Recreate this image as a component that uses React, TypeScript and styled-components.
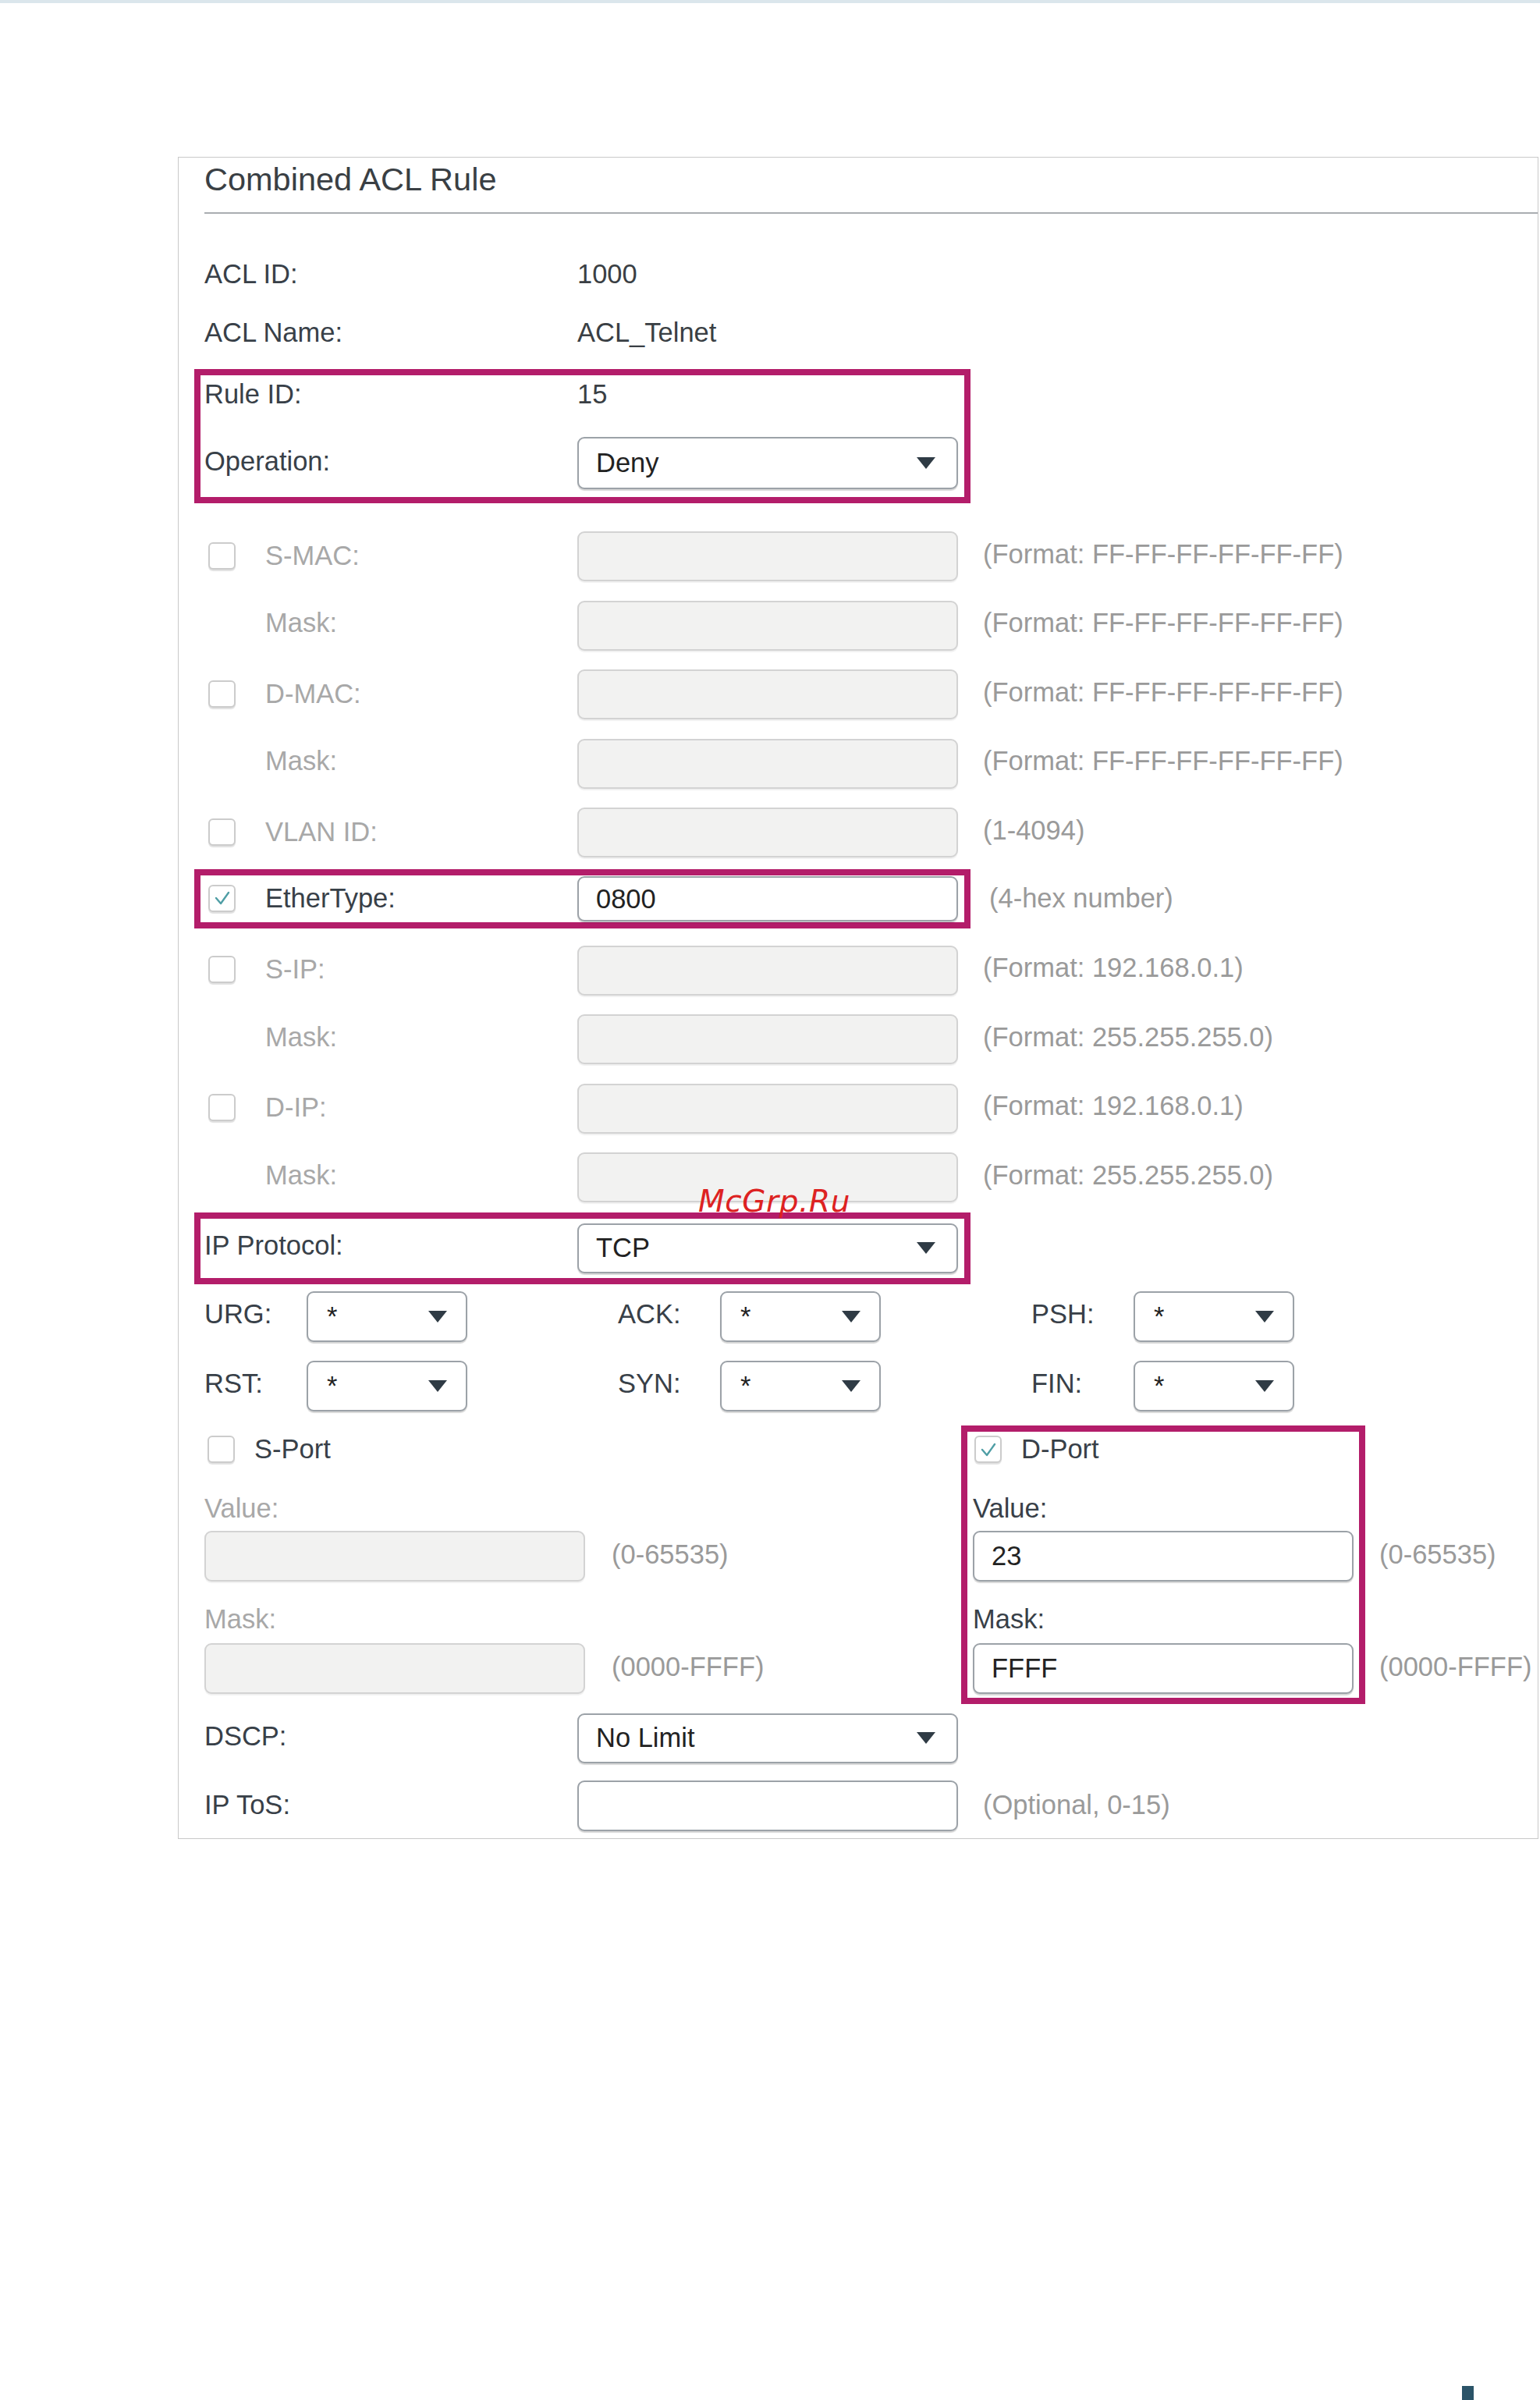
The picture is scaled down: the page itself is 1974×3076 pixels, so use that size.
import React from "react";
import styled, { createGlobalStyle } from "styled-components";

const MAGENTA = "#b31d6a";
const DARK = "#384048";
const MUTED = "#a8a8a8";
const HINT = "#9a9a9a";

const GlobalStyle = createGlobalStyle`
  html, body {
    margin: 0;
    padding: 0;
    background: #ffffff;
  }
  body {
    font-family: "Liberation Sans", Arial, sans-serif;
  }
`;

const Page = styled.div`
  position: relative;
  width: 1974px;
  min-height: 3076px;
  box-sizing: border-box;
  border-top: 4px solid #dbe6ec;
  padding: 197px 0 0 228px;
`;

const Panel = styled.section`
  width: 1744px;
  box-sizing: border-box;
  border: 1px solid #c9c9c9;
  padding: 1px 0 9px 33px;
`;

const Title = styled.h2`
  margin: 0;
  font-size: 41.5px;
  font-weight: 400;
  line-height: 54px;
  color: #3a3f44;
`;

const Rule = styled.div`
  margin-top: 15px;
  height: 2px;
  background: #a9adb1;
`;

const Row = styled.div<{ $h: number; $mt?: number }>`
  display: flex;
  align-items: center;
  height: ${({ $h }) => $h}px;
  margin-top: ${({ $mt = 0 }) => $mt}px;
  font-size: 34.5px;
`;

const LabelCell = styled.div<{ $indent?: number; $muted?: boolean; $w?: number; $lift?: number }>`
  display: flex;
  align-items: center;
  flex: none;
  width: ${({ $w = 478 }) => $w}px;
  padding-left: ${({ $indent = 0 }) => $indent}px;
  padding-bottom: ${({ $lift = 0 }) => $lift}px;
  box-sizing: border-box;
  color: ${({ $muted }) => ($muted ? MUTED : DARK)};
  white-space: nowrap;
`;

const Value = styled.span`
  color: #3a3f44;
`;

const Highlight = styled.div<{ $mt?: number; $pb?: number }>`
  width: 995px;
  box-sizing: border-box;
  margin-left: -13px;
  margin-top: ${({ $mt = 0 }) => $mt}px;
  border: 8px solid ${MAGENTA};
  padding: 0 0 ${({ $pb = 0 }) => $pb}px 5px;
`;

const Field = styled.div<{ $disabled?: boolean; $w?: number; $h?: number }>`
  display: flex;
  align-items: center;
  flex: none;
  width: ${({ $w = 488 }) => $w}px;
  height: ${({ $h = 64 }) => $h}px;
  box-sizing: border-box;
  padding: 0 20px 0 22px;
  border: 2px solid ${({ $disabled }) => ($disabled ? "#d3d3d3" : "#9ca2a8")};
  border-radius: 9px;
  background: ${({ $disabled }) => ($disabled ? "#f2f2f1" : "#ffffff")};
  box-shadow: 0 2px 1px
    ${({ $disabled }) => ($disabled ? "rgba(0,0,0,0.06)" : "rgba(0,0,0,0.16)")};
  color: #222;
  font-size: 34.5px;
`;

const SelectBox = styled(Field)<{ $pr?: number; $pl?: number }>`
  justify-content: space-between;
  padding: 0 ${({ $pr = 27 }) => $pr}px 0 ${({ $pl = 22 }) => $pl}px;
`;

const Arrow = styled.span`
  width: 0;
  height: 0;
  border-left: 12px solid transparent;
  border-right: 12px solid transparent;
  border-top: 15px solid #2f3b45;
`;

const Hint = styled.span<{ $ml?: number; $lift?: number }>`
  margin-left: ${({ $ml = 32 }) => $ml}px;
  padding-bottom: ${({ $lift = 0 }) => $lift}px;
  color: ${HINT};
  font-size: 34.5px;
  white-space: nowrap;
`;

const Box = styled.span<{ $ml?: number; $mr?: number }>`
  display: inline-flex;
  align-items: center;
  justify-content: center;
  flex: none;
  width: 35px;
  height: 35px;
  box-sizing: border-box;
  margin-left: ${({ $ml = 5 }) => $ml}px;
  margin-right: ${({ $mr = 38 }) => $mr}px;
  border: 2px solid #cccccc;
  border-radius: 6px;
  background: #fff;
  box-shadow: 0 2px 1px rgba(0, 0, 0, 0.12);
`;

function Checkbox({ checked, ml, mr }: { checked?: boolean; ml?: number; mr?: number }) {
  return (
    <Box $ml={ml} $mr={mr}>
      {checked && (
        <svg width="26" height="26" viewBox="0 0 26 26">
          <polyline
            points="5,13 11,20 21,6"
            fill="none"
            stroke="#4f9ea5"
            strokeWidth="2.4"
            strokeLinecap="round"
            strokeLinejoin="round"
          />
        </svg>
      )}
    </Box>
  );
}

function Select({ value, w, h, pl, pr }: { value: string; w?: number; h?: number; pl?: number; pr?: number }) {
  return (
    <SelectBox $w={w} $h={h} $pl={pl} $pr={pr}>
      <span>{value}</span>
      <Arrow />
    </SelectBox>
  );
}

const FlagGrid = styled.div`
  display: grid;
  grid-template-columns: repeat(3, 530px);
  row-gap: 24px;
  margin-top: 9px;
  font-size: 34.5px;
`;

const FlagCell = styled.div`
  display: flex;
  align-items: center;
  height: 65px;
`;

const PortSection = styled.div`
  display: grid;
  grid-template-columns: 985px 518px;
  margin-top: 18px;
  margin-left: -15px;
`;

const PortBox = styled.div<{ $active?: boolean }>`
  width: 518px;
  box-sizing: border-box;
  border: 8px solid ${({ $active }) => ($active ? MAGENTA : "transparent")};
  padding: 0 6px 5px 7px;
  font-size: 34.5px;
`;

const PortLine = styled.div<{ $h: number; $mt?: number; $muted?: boolean }>`
  display: flex;
  align-items: center;
  width: max-content;
  height: ${({ $h }) => $h}px;
  margin-top: ${({ $mt = 0 }) => $mt}px;
  color: ${({ $muted }) => ($muted ? MUTED : DARK)};
`;

const Watermark = styled.div`
  position: absolute;
  left: 895px;
  top: 1516px;
  font-family: "DejaVu Sans", sans-serif;
  font-style: italic;
  font-size: 39px;
  line-height: 39px;
  letter-spacing: 0.6px;
  color: #dd2222;
  pointer-events: none;
`;

const Corner = styled.div`
  width: 15px;
  height: 19px;
  margin: 701px 0 0 1646px;
  background: #2b5468;
`;

type FieldRow = {
  label: string;
  check?: boolean;
  hint: string;
};

const macRows: FieldRow[] = [
  { label: "S-MAC:", check: true, hint: "(Format: FF-FF-FF-FF-FF-FF)" },
  { label: "Mask:", hint: "(Format: FF-FF-FF-FF-FF-FF)" },
  { label: "D-MAC:", check: true, hint: "(Format: FF-FF-FF-FF-FF-FF)" },
  { label: "Mask:", hint: "(Format: FF-FF-FF-FF-FF-FF)" },
  { label: "VLAN ID:", check: true, hint: "(1-4094)" },
];

const ipRows: FieldRow[] = [
  { label: "S-IP:", check: true, hint: "(Format: 192.168.0.1)" },
  { label: "Mask:", hint: "(Format: 255.255.255.0)" },
  { label: "D-IP:", check: true, hint: "(Format: 192.168.0.1)" },
  { label: "Mask:", hint: "(Format: 255.255.255.0)" },
];

function DisabledRow({ row, mt }: { row: FieldRow; mt?: number }) {
  return (
    <Row $h={88.5} $mt={mt}>
      <LabelCell $muted $indent={row.check ? 0 : 78} $lift={row.check ? 2 : 6}>
        {row.check && <Checkbox />}
        {row.label}
      </LabelCell>
      <Field $disabled />
      <Hint $lift={6}>{row.hint}</Hint>
    </Row>
  );
}

const flags = ["URG:", "ACK:", "PSH:", "RST:", "SYN:", "FIN:"];

export default function App() {
  return (
    <Page>
      <GlobalStyle />
      <Panel>
        <Title>Combined ACL Rule</Title>
        <Rule />

        <Row $h={75} $mt={40}>
          <LabelCell>ACL ID:</LabelCell>
          <Value>1000</Value>
        </Row>
        <Row $h={75}>
          <LabelCell>ACL Name:</LabelCell>
          <Value>ACL_Telnet</Value>
        </Row>

        <Highlight $mt={9} $pb={10}>
          <Row $h={48}>
            <LabelCell>Rule ID:</LabelCell>
            <Value>15</Value>
          </Row>
          <Row $h={67} $mt={31}>
            <LabelCell $lift={4}>Operation:</LabelCell>
            <Select value="Deny" h={67} />
          </Row>
        </Highlight>

        {macRows.map((row, i) => (
          <DisabledRow key={"mac" + i} row={row} mt={i === 0 ? 24 : 0} />
        ))}

        <Highlight $mt={2.5}>
          <Row $h={60}>
            <LabelCell $lift={2}>
              <Checkbox checked />
              EtherType:
            </LabelCell>
            <Field $h={58}>0800</Field>
            <Hint $ml={40} $lift={2}>(4-hex number)</Hint>
          </Row>
        </Highlight>

        {ipRows.map((row, i) => (
          <DisabledRow key={"ip" + i} row={row} mt={i === 0 ? 9.5 : 0} />
        ))}

        <Highlight>
          <Row $h={76}>
            <LabelCell $lift={6}>IP Protocol:</LabelCell>
            <Select value="TCP" />
          </Row>
        </Highlight>

        <FlagGrid>
          {flags.map((name) => (
            <FlagCell key={name}>
              <LabelCell $w={131} $lift={6}>
                {name}
              </LabelCell>
              <Select value="*" w={206} h={65} pl={24} pr={24} />
            </FlagCell>
          ))}
        </FlagGrid>

        <PortSection>
          <PortBox>
            <PortLine $h={46}>
              <Checkbox ml={4} mr={25} />
              S-Port
            </PortLine>
            <PortLine $h={46} $mt={30} $muted>
              Value:
            </PortLine>
            <PortLine $h={65} $mt={5}>
              <Field $disabled $h={65} />
              <Hint $ml={34} $lift={4}>(0-65535)</Hint>
            </PortLine>
            <PortLine $h={46} $mt={26} $muted>
              Mask:
            </PortLine>
            <PortLine $h={65} $mt={7}>
              <Field $disabled $h={65} />
              <Hint $ml={34} $lift={4}>(0000-FFFF)</Hint>
            </PortLine>
          </PortBox>

          <PortBox $active>
            <PortLine $h={46}>
              <Checkbox checked ml={2} mr={25} />
              D-Port
            </PortLine>
            <PortLine $h={46} $mt={30}>
              Value:
            </PortLine>
            <PortLine $h={65} $mt={5}>
              <Field $h={65}>23</Field>
              <Hint $ml={33} $lift={4}>(0-65535)</Hint>
            </PortLine>
            <PortLine $h={46} $mt={26}>
              Mask:
            </PortLine>
            <PortLine $h={65} $mt={7}>
              <Field $h={65}>FFFF</Field>
              <Hint $ml={33} $lift={4}>(0000-FFFF)</Hint>
            </PortLine>
          </PortBox>
        </PortSection>

        <Row $h={64} $mt={12}>
          <LabelCell $lift={4}>DSCP:</LabelCell>
          <Select value="No Limit" />
        </Row>
        <Row $h={65} $mt={22}>
          <LabelCell $lift={2}>IP ToS:</LabelCell>
          <Field $h={65} />
          <Hint $lift={2}>(Optional, 0-15)</Hint>
        </Row>
      </Panel>
      <Corner />
      <Watermark>McGrp.Ru</Watermark>
    </Page>
  );
}
